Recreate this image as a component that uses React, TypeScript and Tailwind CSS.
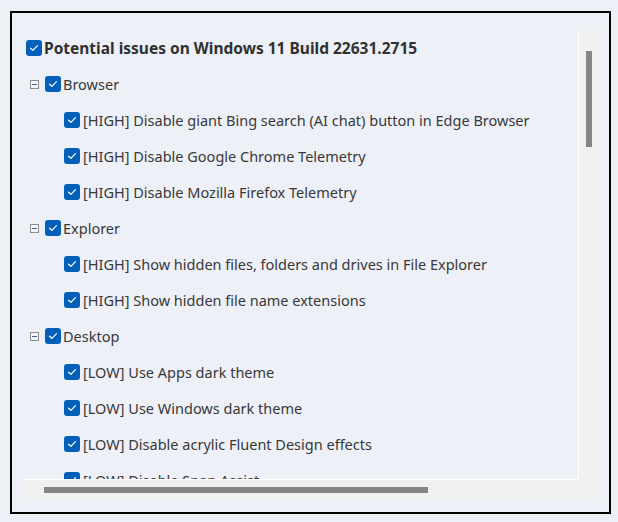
import React from "react";

const font = { fontFamily: '"Noto Sans", "Open Sans", sans-serif' };

function Check() {
  return (
    <div className="w-[16px] h-[16px] rounded-[3px] bg-[#005fb8] flex items-center justify-center shrink-0">
      <svg width="10" height="8" viewBox="0 0 10 8">
        <path d="M1.5 4.2 L3.9 6.3 L8.5 1.6" fill="none" stroke="#ffffff" strokeWidth="1.2" strokeLinecap="round" strokeLinejoin="round" />
      </svg>
    </div>
  );
}

function Expander() {
  return (
    <div className="w-[9px] h-[9px] border border-[#8c8c8c] flex items-center justify-center shrink-0 bg-[#f4f5fa]">
      <div className="w-[5px] h-[1px] bg-[#4b5e82]" />
    </div>
  );
}

const groups = [
  {
    name: "Browser",
    items: [
      "[HIGH] Disable giant Bing search (AI chat) button in Edge Browser",
      "[HIGH] Disable Google Chrome Telemetry",
      "[HIGH] Disable Mozilla Firefox Telemetry",
    ],
  },
  {
    name: "Explorer",
    items: [
      "[HIGH] Show hidden files, folders and drives in File Explorer",
      "[HIGH] Show hidden file name extensions",
    ],
  },
  {
    name: "Desktop",
    items: [
      "[LOW] Use Apps dark theme",
      "[LOW] Use Windows dark theme",
      "[LOW] Disable acrylic Fluent Design effects",
      "[LOW] Disable Snap Assist",
    ],
  },
];

export default function App() {
  return (
    <div className="w-[618px] h-[522px] bg-[#eef0f8] pt-[11px] pl-[10px]" style={font}>
      <div className="w-[601px] h-[503px] border-2 border-black pl-[11px] pt-[17px] pr-[9px] pb-[13px]">
        <div className="w-[577px] h-[469px] bg-[#f0f0f0] flex flex-col">
          <div className="flex h-[450px]">
            <div className="w-[556px] h-[450px] bg-[#eef0f8] border-r border-b border-white overflow-hidden text-[14.5px] text-[#383838]">
              <div className="h-[36px] flex items-center pl-[3px] gap-[2px]">
                <Check />
                <span className="pt-[2px] font-bold text-[15.5px] text-[#303030] whitespace-nowrap">Potential issues on Windows 11 Build 22631.2715</span>
              </div>
              {groups.map((g) => (
                <div key={g.name}>
                  <div className="h-[36px] flex items-center pl-[7px]">
                    <Expander />
                    <div className="ml-[6px]">
                      <Check />
                    </div>
                    <span className="ml-[2px] pt-[2px] whitespace-nowrap">{g.name}</span>
                  </div>
                  {g.items.map((it) => (
                    <div key={it} className="h-[36px] flex items-center pl-[41px] gap-[3px]">
                      <Check />
                      <span className="pt-[2px] whitespace-nowrap">{it}</span>
                    </div>
                  ))}
                </div>
              ))}
            </div>
            <div className="w-[21px] pt-[21px] pl-[7px]">
              <div className="w-[6px] h-[96px] bg-[#858585]" />
            </div>
          </div>
          <div className="h-[19px] pl-[21px] pt-[7px]">
            <div className="w-[384px] h-[6px] bg-[#858585]" />
          </div>
        </div>
      </div>
    </div>
  );
}
